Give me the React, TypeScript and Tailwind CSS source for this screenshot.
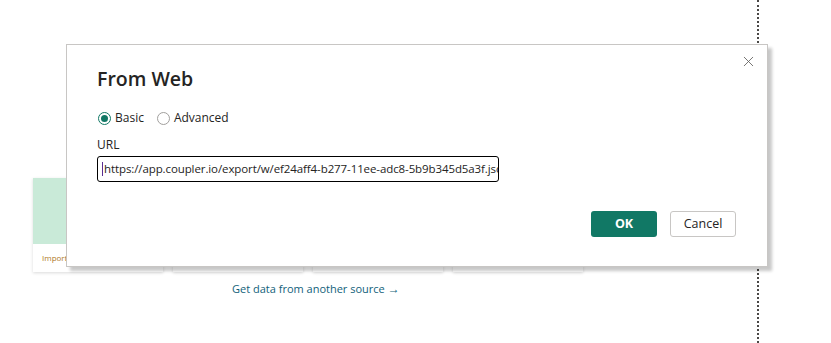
import { X } from 'lucide-react';

const font = { fontFamily: '"Open Sans", "Noto Sans", sans-serif' };

function Radio({ label, checked }: { label: string; checked?: boolean }) {
    return (
        <label className="flex items-center gap-[4px] text-[12px] text-[#252423]">
            <span
                className={
                    'w-[13px] h-[13px] rounded-full border flex items-center justify-center ' +
                    (checked ? 'border-[#117865]' : 'border-[#a19f9d]')
                }
            >
                {checked && <span className="w-[7px] h-[7px] rounded-full bg-[#117865]" />}
            </span>
            {label}
        </label>
    );
}

export default function App() {
    return (
        <div className="relative w-[831px] h-[343px] bg-white overflow-hidden" style={font}>
            <div className="flex h-full">
                <div className="w-[759px] h-full border-r-2 border-dotted border-[#4a4846] pt-[178px] pl-[33px]">
                    <div className="flex gap-[10px]">
                        <div className="w-[130px] h-[94px] bg-white shadow-[0_1px_3px_rgba(0,0,0,0.15)] flex flex-col">
                            <div className="h-[66px] bg-[#c9ead8]" />
                            <div className="px-[9px] pt-[8px] text-[8px] text-[#b07a2a]">Import data</div>
                        </div>
                        <div className="w-[130px] h-[94px] bg-white shadow-[0_1px_3px_rgba(0,0,0,0.15)]" />
                        <div className="w-[130px] h-[94px] bg-white shadow-[0_1px_3px_rgba(0,0,0,0.15)]" />
                        <div className="w-[130px] h-[94px] bg-white shadow-[0_1px_3px_rgba(0,0,0,0.15)]" />
                    </div>
                    <div className="mt-[8px] ml-[199px] text-[11px] text-[#11617a] flex items-center gap-[3px]">
                        Get data from another source
                        <span className="text-[12px]">→</span>
                    </div>
                </div>
            </div>

            {/* dialog */}
            <div className="absolute left-[66px] top-[44px] w-[702px] h-[223px] bg-white border border-[#c8c6c4] shadow-[4px_4px_3px_rgba(0,0,0,0.22)]">
                <button className="absolute right-[10px] top-[8px] text-[#605e5c]">
                    <X size={17} strokeWidth={1.2} />
                </button>
                <div className="pl-[30px] pt-[21px]">
                    <h2 className="text-[19.5px] font-semibold text-[#252423] leading-[26px]">From Web</h2>
                    <div className="flex gap-[13px] mt-[17px] ml-[1px]">
                        <Radio label="Basic" checked />
                        <Radio label="Advanced" />
                    </div>
                    <div className="mt-[9px] text-[12px] text-[#252423]">URL</div>
                    <div className="mt-[2px] w-[402px] h-[26px] border border-[#000] rounded-[3px] flex items-center pl-[4px] overflow-hidden">
                        <span className="w-px h-[14px] bg-[#5b2d90] mr-px shrink-0" />
                        <span className="whitespace-nowrap text-[11.5px] text-[#252423] tracking-[-0.1px]">
                            https://app.coupler.io/export/w/ef24aff4-b277-11ee-adc8-5b9b345d5a3f.json
                        </span>
                    </div>
                </div>
                <div className="flex justify-end gap-[13px] pr-[31px] mt-[29px]">
                    <button className="w-[66px] h-[26px] rounded-[3px] bg-[#117865] text-white text-[12.5px] font-bold">
                        OK
                    </button>
                    <button className="w-[66px] h-[26px] rounded-[3px] bg-white border border-[#c8c6c4] text-[#252423] text-[12.5px]">
                        Cancel
                    </button>
                </div>
            </div>
        </div>
    );
}
